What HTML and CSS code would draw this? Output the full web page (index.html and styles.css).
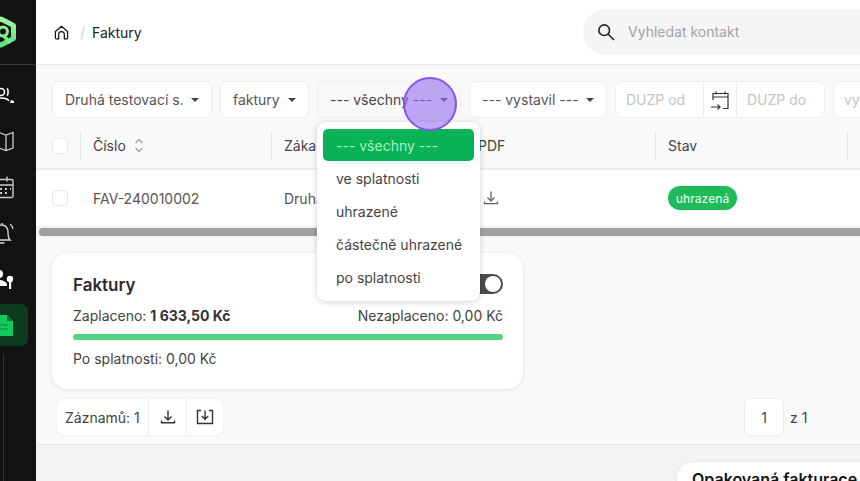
FILE: index.html
```html
<!DOCTYPE html>
<html lang="cs">
<head>
<meta charset="utf-8">
<title>Faktury</title>
<link rel="stylesheet" href="styles.css">
</head>
<body>
<div class="app">
  <aside class="sidebar">
    <div class="logo">
      <svg width="34" height="34" viewBox="0 0 34 34" fill="none">
        <defs><linearGradient id="lg" x1="0" y1="0" x2="0" y2="1"><stop offset="0" stop-color="#a4f5a0"/><stop offset="1" stop-color="#58e480"/></linearGradient></defs>
        <path d="M15 4 27.500 10.500v13L15 30 2.500 23.500v-13Z" stroke="url(#lg)" stroke-width="5" stroke-linejoin="round"/>
        <circle cx="17" cy="16.500" r="4.500" stroke="#8cee90" stroke-width="3"/>
        <path d="M18 21l6 7" stroke="#7be98a" stroke-width="3.500"/>
      </svg>
    </div>
    <nav class="nav">
      <a class="nav-item"><svg class="nav-icon" viewBox="0 0 24 24" fill="none" stroke="#fff" stroke-width="1.600"><circle cx="11" cy="9" r="3.500"/><path d="M17 5.500c1.500 1 1.500 6 0 7M2 19c1-3 4-4 9-4s7 1 8 3"/><path d="M21 17l3 1v2h-4z" fill="#fff" stroke="none"/></svg></a>
      <a class="nav-item"><svg class="nav-icon" viewBox="0 0 24 24" fill="none" stroke="#c9c9c9" stroke-width="1.300"><path d="M3 6l6-2.500 7 2.500 7-2.500v15.500L16 21.500 9 19 3 21.500zM9 3.500V19M16 6v15.500"/></svg></a>
      <a class="nav-item"><svg class="nav-icon" viewBox="0 0 24 24" fill="none" stroke="#c9c9c9" stroke-width="1.400"><rect x="1" y="4.500" width="22" height="18" rx="1.500"/><path d="M1 10h22M7 1.500v5M17 1.500v5"/><path d="M5 14h2M10 14h2M15 14h2M20 14h1M5 18h2M10 18h2M15 18h2" stroke-width="2"/></svg></a>
      <a class="nav-item"><svg class="nav-icon" viewBox="0 0 24 24" fill="none" stroke="#d8d8d8" stroke-width="1.400"><path d="M4 19c2-2 2-5 2-8 0-4 2.500-7 6-7s6 3 6 7c0 3 0 6 2 8zM9.500 22h5M12 2v2"/><path d="M20 3c2 1.500 2.500 3 3 5" stroke-width="1.100"/></svg></a>
      <a class="nav-item"><svg class="nav-icon" viewBox="0 0 24 24" fill="#fff"><circle cx="9" cy="7" r="4"/><path d="M1 19c0-4 4-6 8-6s7 1.500 8 4v2z"/><circle cx="20" cy="12" r="3.200"/><path d="M19 14h2.200v8H19z"/></svg></a>
      <a class="nav-item nav-active"><svg class="nav-icon nav-doc" viewBox="0 0 24 24"><path d="M0 2h15l6 6v15H0z" fill="#12c95d"/><path d="M15 2v6h6z" fill="#0b6e35"/><path d="M7 12h9M7 16h9" stroke="#0b8a42" stroke-width="1.200"/></svg></a>
    </nav>
    <div class="rail"></div>
  </aside>

  <main class="main">
    <header class="topbar">
      <svg class="home" width="15" height="15" viewBox="0 0 16 16" fill="none" stroke="#111" stroke-width="1.300"><path d="M1.500 7 8 1.500 14.500 7v6.500a1.300 1.300 0 0 1-1.300 1.300h-2.200V10a3 3 0 0 0-6 0v4.800H2.800a1.300 1.300 0 0 1-1.300-1.300z"/></svg>
      <span class="crumb-sep">/</span>
      <span class="crumb">Faktury</span>
      <div class="search">
        <svg width="18" height="18" viewBox="0 0 18 18" fill="none" stroke="#222" stroke-width="1.600"><circle cx="7.200" cy="7.200" r="5.300"/><path d="M11 11l6 6"/></svg>
        <span class="search-text">Vyhledat kontakt</span>
      </div>
    </header>

    <section class="content">
      <div class="filters">
        <div class="select w1">Druhá testovací s.<i class="caret"></i></div>
        <div class="select w2">faktury<i class="caret"></i></div>
        <div class="select w3 select-open">--- všechny ---<i class="caret"></i></div>
        <div class="select w4">--- vystavil ---<i class="caret"></i></div>
        <div class="dates">
          <span class="date-field">DUZP od</span>
          <span class="date-icon"><svg width="20" height="20" viewBox="0 0 20 20" fill="none" stroke="#333" stroke-width="1.200"><path d="M3 10V3.500h15v15h-5M3 7h15M6 1.500v3M15 1.500v3M1 17h9M7.500 14.500 10 17l-2.500 2.500"/></svg></span>
          <span class="date-field">DUZP do</span>
        </div>
        <div class="date-last">vystaveno</div>
      </div>

      <div class="table">
        <div class="tr thead">
          <div class="c-check"><span class="check"></span></div>
          <div class="c c1">Číslo<svg class="sort" width="10" height="15" viewBox="0 0 10 15" fill="none" stroke="#999" stroke-width="1.200"><path d="M1.500 5 5 1.500 8.500 5M1.500 10 5 13.500 8.500 10"/></svg></div>
          <div class="c c2">Zákazník</div>
          <div class="c c3">PDF</div>
          <div class="c c4">Stav</div>
          <div class="c c5"></div>
        </div>
        <div class="tr tbody">
          <div class="c-check"><span class="check"></span></div>
          <div class="c c1">FAV-240010002</div>
          <div class="c c2">Druhá testovací s.r.o.</div>
          <div class="c c3 pdf"><svg width="16" height="16" viewBox="0 0 16 16" fill="none" stroke="#666" stroke-width="1.300"><path d="M8 1.500v9M4.500 7.500 8 11l3.500-3.500M1.500 11.500v2.200h13v-2.200"/></svg></div>
          <div class="c c4"><span class="badge">uhrazená</span></div>
        </div>
      </div>
      <div class="scroll-track"><div class="scroll-thumb"></div></div>

      <div class="lower">
        <div class="card">
          <div class="card-head">
            <h2 class="card-title">Faktury</h2>
            <span class="toggle"><i class="knob"></i></span>
          </div>
          <div class="card-row"><span>Zaplaceno: <b>1 633,50 Kč</b></span><span>Nezaplaceno: 0,00 Kč</span></div>
          <div class="bar"></div>
          <div class="card-note">Po splatnosti: 0,00 Kč</div>
        </div>
        <div class="pager-row">
          <div class="records">
            <span class="rec-text">Záznamů: 1</span>
            <span class="rec-btn"><svg width="16" height="16" viewBox="0 0 16 16" fill="none" stroke="#333" stroke-width="1.400"><path d="M8 1.500v9M4.500 7.500 8 11l3.500-3.500M1.500 11.500v2.200h13v-2.200"/></svg></span>
            <span class="rec-btn"><svg width="18" height="16" viewBox="0 0 18 16" fill="none" stroke="#333" stroke-width="1.400"><path d="M5 1.500H1.500v13h15v-13H13M9 1.500v8.500M5.800 7 9 10.200 12.200 7"/></svg></span>
          </div>
          <div class="pages"><span class="page-box">1</span><span class="page-of">z 1</span></div>
        </div>
      </div>
    </section>

    <footer class="bottom">
      <div class="bottom-btn">Opakovaná fakturace</div>
    </footer>

    <ul class="menu">
      <li class="menu-item menu-active">--- všechny ---</li>
      <li class="menu-item">ve splatnosti</li>
      <li class="menu-item">uhrazené</li>
      <li class="menu-item">částečně uhrazené</li>
      <li class="menu-item">po splatnosti</li>
    </ul>
    <div class="cursor"></div>
  </main>
</div>
</body>
</html>
```
FILE: styles.css
```css
* { box-sizing: border-box; }
html, body { margin: 0; height: 100%; overflow: hidden; }
body { font-family: Inter, "Noto Sans", sans-serif; font-size: 14px; color: #444; background: #f3f3f3; }
.app { display: flex; width: 860px; height: 481px; overflow: hidden; }

.sidebar { flex: 0 0 36px; width: 36px; background: #121212; display: flex; flex-direction: column; overflow: hidden; }
.logo { height: 65px; flex: none; border-bottom: 1px solid #3a3a3a; padding: 15px 0 0; margin-left: -14px; width: 50px; }
.logo svg { display: block; }
.nav { display: flex; flex-direction: column; gap: 4px; padding-top: 9px; margin-left: -12px; width: 40px; flex: none; }
.nav-item { height: 42px; display: flex; align-items: center; padding-left: 2px; border-radius: 7px; }
.nav-icon { width: 24px; height: 24px; flex: none; }
.nav-active { background: #0d3b20; }
.nav-doc { margin-left: 2px; }
.rail { width: 1px; flex: 1; margin: 8px 0 0 3px; background: #333; }

.main { flex: 1; min-width: 0; position: relative; display: flex; flex-direction: column; overflow: hidden; }
.topbar { flex: none; height: 65px; background: #fff; border-bottom: 1px solid #e6e6e6; display: flex; align-items: center; padding-left: 18px; }
.home { flex: none; }
.crumb-sep { margin-left: 11px; color: #ccc; }
.crumb { margin-left: 7px; color: #222; flex: none; width: 49px; white-space: nowrap; }
.search { margin-left: 442px; flex: none; width: 320px; height: 46px; border-radius: 23px; background: #f5f5f5; display: flex; align-items: center; padding-left: 14px; margin-top: -1px; }
.search-text { margin-left: 13px; color: #a3a3a3; }

.content { flex: none; height: 380px; background: #f9f9f9; border-bottom: 1px solid #e6e6e6; display: flex; flex-direction: column; }
.filters { display: flex; gap: 8px; padding: 16px 0 0 16px; width: 900px; }
.select { height: 37px; flex: none; display: flex; align-items: center; justify-content: space-between; padding: 0 12px; background: #fff; border: 1px solid #eee; border-radius: 7px; color: #555; white-space: nowrap; }
.w1 { width: 160px; }
.w2 { width: 89px; }
.w3 { width: 144px; }
.w4 { width: 138px; }
.select-open { background: #f8f8f8; color: #444; }
.caret { width: 0; height: 0; border: 4px solid transparent; border-top-color: #444; border-bottom: 0; flex: none; }
.dates { flex: none; width: 210px; height: 37px; display: flex; background: #fff; border: 1px solid #eee; border-radius: 7px; color: #c4c4c4; }
.date-field { flex: 0 0 87px; display: flex; align-items: center; padding-left: 10px; white-space: nowrap; }
.date-icon { flex: 0 0 34px; display: flex; align-items: center; justify-content: center; border-left: 1px solid #eee; border-right: 1px solid #eee; }
.date-last { flex: none; width: 120px; height: 37px; display: flex; align-items: center; padding-left: 10px; background: #fff; border: 1px solid #eee; border-radius: 7px; color: #c4c4c4; }

.table { margin-top: 5px; width: 900px; }
.tr { display: flex; align-items: center; }
.thead { height: 47px; background: #f9f9f9; border-bottom: 2px solid #ececec; color: #444; }
.tbody { height: 56px; background: #fff; color: #555; }
.c-check { flex: 0 0 44px; padding-left: 16px; display: flex; }
.check { width: 16px; height: 16px; background: #fff; border: 1px solid #e8e8e8; border-radius: 4px; }
.c { display: flex; align-items: center; padding-left: 13px; white-space: nowrap; overflow: hidden; }
.thead .c { height: 28px; border-left: 1px solid #e6e6e6; padding-left: 12px; }
.c1 { flex: 0 0 191px; }
.c2 { flex: 0 0 194px; }
.c3 { flex: 0 0 190px; }
.c4 { flex: 0 0 192px; }
.c5 { flex: 1; }
.sort { margin-left: 8px; }
.tbody .pdf { padding-left: 18px; }
.badge { height: 24px; width: 69px; display: flex; align-items: center; justify-content: center; background: #1fbb5b; color: #d8f7e3; border-radius: 12px; font-size: 12px; font-weight: 500; }

.scroll-track { flex: none; height: 11px; background: #f1f1f1; padding: 2px 0 1px 3px; }
.scroll-thumb { height: 8px; width: 860px; background: #a0a0a0; border-radius: 4px; }

.lower { flex: 1; padding: 16px 0 0 16px; display: flex; flex-direction: column; }
.card { width: 471px; height: 136px; background: #fff; border-radius: 16px; box-shadow: 0 1px 5px rgba(0,0,0,.09); padding: 20px 20px 0 21px; flex: none; }
.card-head { display: flex; justify-content: space-between; align-items: center; height: 22px; }
.card-title { margin: 1px 0 0; font-size: 17px; font-weight: 600; color: #2b2b2b; }
.toggle { width: 40px; height: 20px; border-radius: 10px; background: #4a4a4a; display: flex; justify-content: flex-end; padding: 2px; }
.knob { width: 16px; height: 16px; border-radius: 50%; background: #fff; }
.card-row { display: flex; justify-content: space-between; margin-top: 13px; height: 16px; line-height: 16px; color: #444; }
.card-row b { font-weight: 700; color: #333; }
.bar { height: 6px; border-radius: 3px; background: #50d681; margin-top: 10px; }
.card-note { margin-top: 11px; color: #444; line-height: 16px; }
.pager-row { display: flex; justify-content: space-between; align-items: center; margin-top: 9px; padding-left: 5px; width: 763px; }
.records { display: flex; align-items: stretch; height: 36px; background: #fff; border-radius: 7px; box-shadow: 0 0 3px rgba(0,0,0,.08); color: #444; }
.rec-text { display: flex; align-items: center; padding: 0 8px; width: 92px; border-right: 1px solid #eee; white-space: nowrap; }
.rec-btn { width: 37px; display: flex; align-items: center; justify-content: center; }
.rec-btn + .rec-btn { border-left: 1px solid #eee; }
.pages { display: flex; align-items: center; gap: 6px; }
.page-box { width: 40px; height: 38px; display: flex; align-items: center; justify-content: center; background: #fff; border: 1px solid #eee; border-radius: 6px; }
.page-of { width: 25px; white-space: nowrap; }

.bottom { flex: 1; background: #f3f3f3; padding: 16px 0 0 640px; }
.bottom-btn { width: 210px; height: 50px; background: #fff; border: 1px solid #e8e8e8; border-radius: 16px; padding: 7px 0 0 15px; font-size: 16px; font-weight: 600; color: #111; white-space: nowrap; }

.menu { position: absolute; left: 281px; top: 122px; width: 163px; height: 179px; margin: 0; padding: 7px 6px; list-style: none; background: #fff; border-radius: 9px; box-shadow: 0 1px 6px rgba(0,0,0,.18); }
.menu-item { height: 33px; display: flex; align-items: center; padding: 1px 0 0 13px; color: #444; white-space: nowrap; }
.menu-active { height: 32px; padding-top: 0; background: #07b355; color: #a8f0c4; border-radius: 5px; }
.cursor { position: absolute; left: 367px; top: 77px; width: 54px; height: 54px; border-radius: 50%; background: rgba(150,110,240,.6); border: 2px solid #8258e0; }
```
